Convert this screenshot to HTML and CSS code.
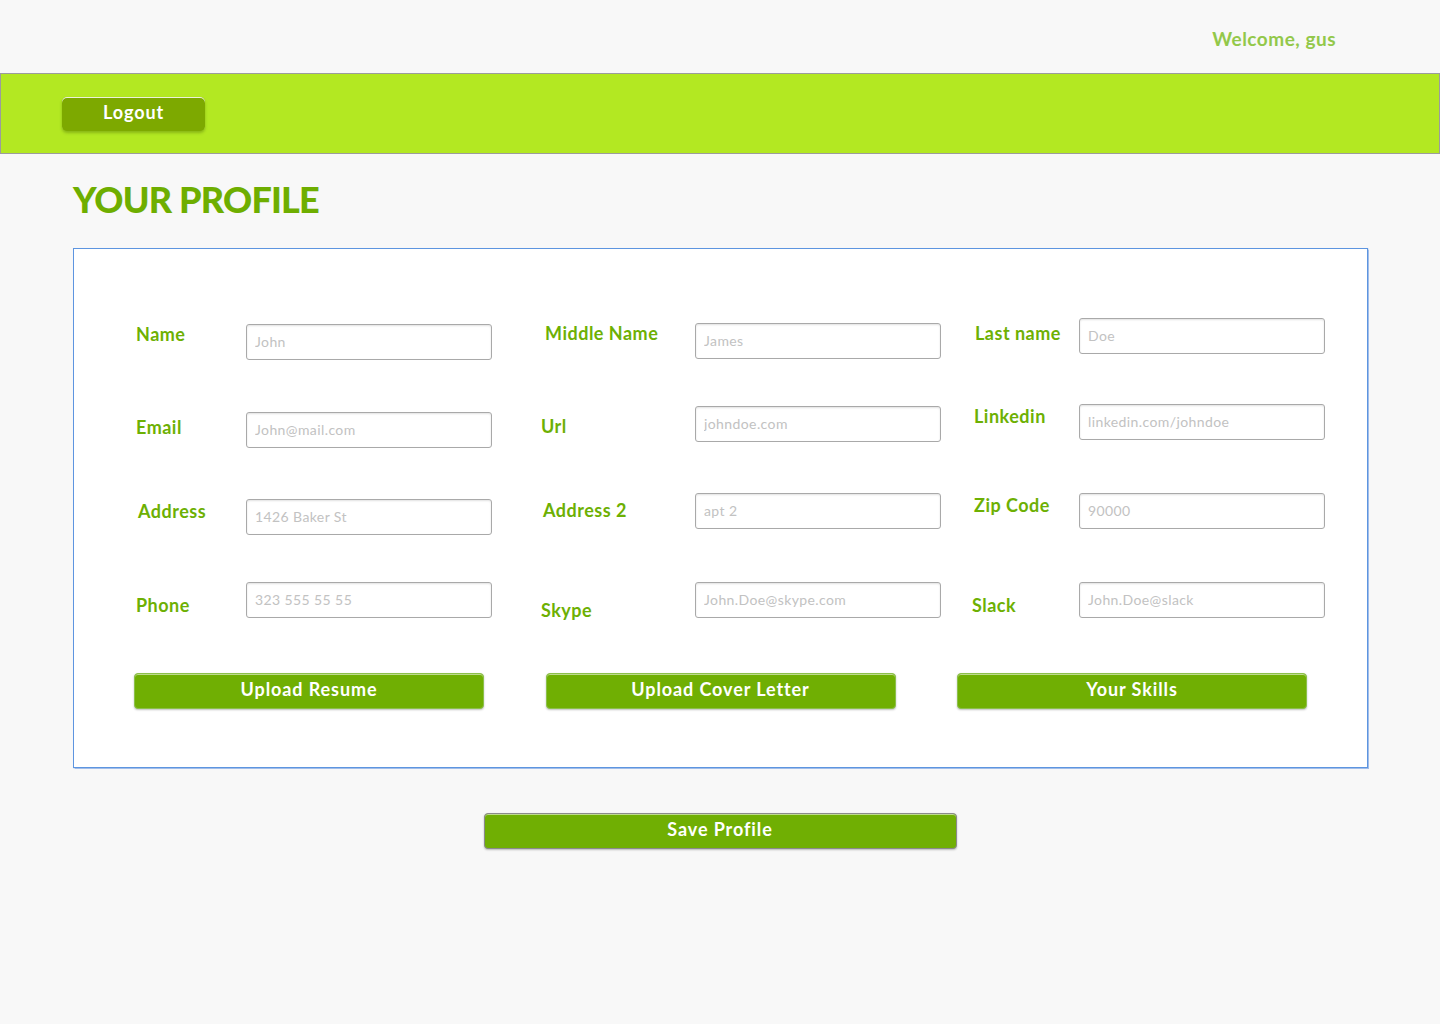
FILE: index.html
```html
<!DOCTYPE html>
<html lang="en">
<head>
<meta charset="utf-8">
<title>Your Profile</title>
<link rel="stylesheet" href="styles.css">
</head>
<body>
  <div class="topbar">
    <span class="welcome">Welcome, gus</span>
  </div>
  <header class="navbar">
    <button class="btn btn-logout" type="button">Logout</button>
  </header>
  <main class="page">
    <h1 class="title">YOUR PROFILE</h1>
    <section class="card">
      <div class="fields">
        <div class="col col-1">
          <div class="field f-name"><label class="lbl">Name</label><input class="inp" placeholder="John"></div>
          <div class="field f-email"><label class="lbl">Email</label><input class="inp" placeholder="John@mail.com"></div>
          <div class="field f-address"><label class="lbl">Address</label><input class="inp" placeholder="1426 Baker St"></div>
          <div class="field f-phone"><label class="lbl">Phone</label><input class="inp" placeholder="323 555 55 55"></div>
        </div>
        <div class="col col-2">
          <div class="field f-middle"><label class="lbl">Middle Name</label><input class="inp" placeholder="James"></div>
          <div class="field f-url"><label class="lbl">Url</label><input class="inp" placeholder="johndoe.com"></div>
          <div class="field f-address2"><label class="lbl">Address 2</label><input class="inp" placeholder="apt 2"></div>
          <div class="field f-skype"><label class="lbl">Skype</label><input class="inp" placeholder="John.Doe@skype.com"></div>
        </div>
        <div class="col col-3">
          <div class="field f-last"><label class="lbl">Last name</label><input class="inp" placeholder="Doe"></div>
          <div class="field f-linkedin"><label class="lbl">Linkedin</label><input class="inp" placeholder="linkedin.com/johndoe"></div>
          <div class="field f-zip"><label class="lbl">Zip Code</label><input class="inp" placeholder="90000"></div>
          <div class="field f-slack"><label class="lbl">Slack</label><input class="inp" placeholder="John.Doe@slack"></div>
        </div>
      </div>
      <div class="actions">
        <button class="btn btn-wide" type="button">Upload Resume</button>
        <button class="btn btn-wide" type="button">Upload Cover Letter</button>
        <button class="btn btn-wide" type="button">Your Skills</button>
      </div>
    </section>
    <div class="save-row">
      <button class="btn btn-save" type="button">Save Profile</button>
    </div>
  </main>
</body>
</html>
```

FILE: styles.css
```css
* { box-sizing: border-box; }

html, body {
  margin: 0;
  padding: 0;
}

body {
  background: #f8f8f8;
  font-family: Lato, "Open Sans", "Liberation Sans", sans-serif;
  width: 1440px;
  min-height: 1024px;
}

.topbar {
  height: 73px;
  padding-top: 4px;
  padding-right: 104px;
  display: flex;
  justify-content: flex-end;
  align-items: center;
}

.welcome {
  color: #93c84a;
  font-weight: 700;
  font-size: 19px;
  letter-spacing: 0.5px;
}

.navbar {
  height: 81px;
  background: #b3e822;
  border: 1px solid #9c9c9c;
  padding: 23px 0 0 61px;
}

.btn {
  font-family: Lato, "Open Sans", "Liberation Sans", sans-serif;
  font-weight: 700;
  font-size: 18px;
  letter-spacing: 0.9px;
  color: #ffffff;
  border: none;
  cursor: pointer;
  padding: 0;
}

.btn-logout {
  width: 143px;
  height: 34px;
  background: #7da900;
  border-radius: 5px;
  box-shadow: inset 0 1px 0 rgba(255,255,255,0.85), 0 2px 3px rgba(60,90,0,0.35);
  padding-bottom: 4px;
}

.page {
  padding: 0 72px 0 73px;
}

.title {
  margin: 24px 0 27px 0;
  font-size: 36px;
  line-height: 1.2;
  font-weight: 900;
  color: #6eae00;
  letter-spacing: -0.8px;
}

.card {
  width: 1295px;
  height: 520px;
  background: #ffffff;
  border: 1px solid #5d95e0;
  box-shadow: 0 0 1px 0.5px rgba(90,140,220,0.55);
  padding: 69px 0 0 62px;
}

.fields {
  display: grid;
  grid-template-columns: 405px 431px 353px;
  align-items: start;
}

.col {
  display: flex;
  flex-direction: column;
}

.field {
  display: flex;
  align-items: flex-start;
}

.lbl {
  flex: none;
  font-size: 18px;
  line-height: 22px;
  font-weight: 700;
  letter-spacing: 0.5px;
  color: #6db003;
  white-space: nowrap;
}

.col-1 .lbl { width: 110px; }
.col-2 .lbl { width: 154px; }
.col-3 .lbl { width: 107px; }

.inp {
  width: 246px;
  height: 36px;
  flex: none;
  border: 1px solid #a9a9a9;
  border-radius: 3px;
  background: #ffffff;
  box-shadow: inset 0 1px 2px rgba(0,0,0,0.12);
  padding: 0 8px 2px 8px;
  font-family: Lato, "Open Sans", "Liberation Sans", sans-serif;
  font-size: 14px;
  font-weight: 400;
  letter-spacing: 0.4px;
  color: #555;
  outline: none;
}

.inp::placeholder {
  color: #c2c2c2;
}

/* column 1 */
.f-name { margin-top: 6px; }
.f-name .lbl { margin-top: -1px; }
.f-email { margin-top: 52px; }
.f-email .lbl { margin-top: 4px; }
.f-address { margin-top: 51px; }
.f-address .lbl { margin-top: 1px; padding-left: 2px; }
.f-phone { margin-top: 47px; }
.f-phone .lbl { margin-top: 12px; }

/* column 2 */
.f-middle { margin-top: 5px; }
.f-middle .lbl { margin-top: -1px; padding-left: 4px; }
.f-url { margin-top: 47px; }
.f-url .lbl { margin-top: 9px; }
.f-address2 { margin-top: 51px; }
.f-address2 .lbl { margin-top: 6px; padding-left: 2px; }
.f-skype { margin-top: 53px; }
.f-skype .lbl { margin-top: 17px; }

/* column 3 */
.f-last { margin-top: 0; }
.f-last .lbl { margin-top: 4px; padding-left: 3px; }
.f-linkedin { margin-top: 50px; }
.f-linkedin .lbl { margin-top: 1px; padding-left: 2px; }
.f-zip { margin-top: 53px; }
.f-zip .lbl { margin-top: 1px; padding-left: 2px; }
.f-slack { margin-top: 53px; }
.f-slack .lbl { margin-top: 12px; }

.actions {
  margin-top: 52px;
  margin-left: -2px;
  display: grid;
  grid-template-columns: 350px 350px 350px;
  column-gap: 61.5px;
}

.btn-wide,
.btn-save {
  height: 36px;
  background: #70af03;
  border-radius: 4px;
  border: 1px solid #8cc04a;
  box-shadow: inset 0 1px 0 rgba(255,255,255,0.55), 0 1px 2px rgba(0,0,0,0.25);
  padding-bottom: 5px;
}

.btn-save {
  width: 473px;
  border-color: #8a8a8a;
}

.save-row {
  display: flex;
  justify-content: center;
  margin-top: 45px;
  margin-left: -1px;
}
```
